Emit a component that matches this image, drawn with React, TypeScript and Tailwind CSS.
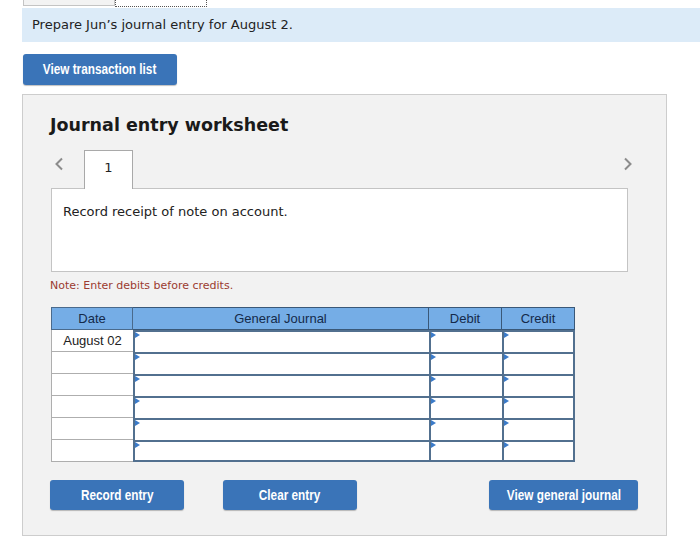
import React from "react";

const arial = { fontFamily: '"Liberation Sans", Arial, sans-serif' };

function Label({ text }: { text: string }) {
  return <span className="inline-block scale-x-[0.84] whitespace-nowrap">{text}</span>;
}

function Btn({ label, w }: { label: string; w: string }) {
  return (
    <button
      className={`${w} h-[30px] bg-[#3a74b8] rounded-[3px] text-white text-[14px] font-bold shadow-[0_1px_1px_rgba(0,0,0,0.25)] flex items-center justify-center`}
      style={arial}
    >
      <Label text={label} />
    </button>
  );
}

function Tri() {
  return (
    <span className="absolute top-0 left-0 w-0 h-0 border-y-[3px] border-y-transparent border-l-[5px] border-l-[#3b7bc9]" />
  );
}

function Row({ date, last }: { date?: string; last?: boolean }) {
  return (
    <div className="flex h-[22px]">
      <div
        className="w-[82px] border-l border-b border-[#aeaeae] bg-white flex items-center justify-center text-[13px] text-[#222]"
        style={arial}
      >
        {date}
      </div>
      <div className={`relative w-[296px] bg-white border-l-2 border-t-2 border-[#52708f] ${last ? "border-b-2" : ""}`}>
        <Tri />
      </div>
      <div className={`relative w-[73px] bg-white border-l-2 border-t-2 border-[#52708f] ${last ? "border-b-2" : ""}`}>
        <Tri />
      </div>
      <div className={`relative w-[73px] bg-white border-l-2 border-t-2 border-r-2 border-[#52708f] ${last ? "border-b-2" : ""}`}>
        <Tri />
      </div>
    </div>
  );
}

export default function App() {
  return (
    <div
      className="w-[700px] h-[554px] bg-white overflow-hidden text-[#222]"
      style={{ fontFamily: '"DejaVu Sans", Verdana, sans-serif' }}
    >
      {/* top strip */}
      <div className="flex h-[8px] pl-[23px]">
        <div className="w-[92px] h-[6px] bg-[#f3f3f3] border-b border-x border-[#c4c4c4]" />
        <div className="w-[92px] h-[7px] border-b border-x border-dotted border-[#555]" />
      </div>
      {/* prompt band */}
      <div className="ml-[22px] h-[34px] bg-[#dcebf8] flex items-center pl-[10px] text-[13px]">
        Prepare Jun’s journal entry for August 2.
      </div>
      <div className="mt-[12px] ml-[23px]">
        <button
          className="w-[154px] h-[31px] bg-[#3a74b8] rounded-[3px] text-white text-[14px] font-bold shadow-[0_1px_1px_rgba(0,0,0,0.25)] flex items-center justify-center"
          style={arial}
        >
          <Label text="View transaction list" />
        </button>
      </div>
      {/* panel */}
      <div className="mt-[9px] ml-[22px] w-[645px] h-[442px] bg-[#f2f2f2] border border-[#cdcdcd] pt-[19px]">
        <div className="pl-[27px] text-[17.5px] font-bold leading-[22px] text-[#1a1a1a]">Journal entry worksheet</div>
        <div className="mt-[14px] flex items-stretch h-[39px] pl-[28px] pr-[31px]">
          <div className="w-[33px] flex items-start pt-[7px] pl-[3px]">
            <svg width="10" height="14" viewBox="0 0 10 14">
              <path d="M8 1.5 L2.5 7 L8 12.5" fill="none" stroke="#8c8c8c" strokeWidth="2" />
            </svg>
          </div>
          <div className="relative z-10 w-[49px] h-[39px] bg-white border-t border-x border-[#a9a9a9] flex items-start justify-center pt-[7px] text-[13px]">
            1
          </div>
          <div className="flex-1" />
          <div className="w-[12px] flex items-start pt-[7px]">
            <svg width="10" height="14" viewBox="0 0 10 14">
              <path d="M2 1.5 L7.5 7 L2 12.5" fill="none" stroke="#8c8c8c" strokeWidth="2" />
            </svg>
          </div>
        </div>
        <div className="ml-[28px] -mt-px w-[577px] h-[84px] bg-white border border-[#c4c4c4] pl-[11px] pt-[15px] text-[13px] leading-[16px]">
          Record receipt of note on account.
        </div>
        <div className="ml-[27px] mt-[7px] text-[11px] leading-[14px] text-[#9b3b30]">Note: Enter debits before credits.</div>
        {/* table */}
        <div className="ml-[28px] mt-[14px] w-[524px]" style={arial}>
          <div className="flex h-[23px] bg-[#75ade6] text-[13px] text-[#142a4a]">
            <div className="w-[82px] border border-[#4a6a8c] flex items-center justify-center">Date</div>
            <div className="w-[296px] border-y border-r border-[#3a5878] flex items-center justify-center">General Journal</div>
            <div className="w-[73px] border-y border-r border-[#3a5878] flex items-center justify-center">Debit</div>
            <div className="w-[73px] border-y border-r border-[#3a5878] flex items-center justify-center">Credit</div>
          </div>
          <Row date="August 02" />
          <Row />
          <Row />
          <Row />
          <Row />
          <Row last />
        </div>
        <div className="mt-[18px] ml-[27px] flex">
          <Btn label="Record entry" w="w-[134px]" />
          <div className="w-[39px]" />
          <Btn label="Clear entry" w="w-[134px]" />
          <div className="w-[132px]" />
          <Btn label="View general journal" w="w-[149px]" />
        </div>
      </div>
    </div>
  );
}
